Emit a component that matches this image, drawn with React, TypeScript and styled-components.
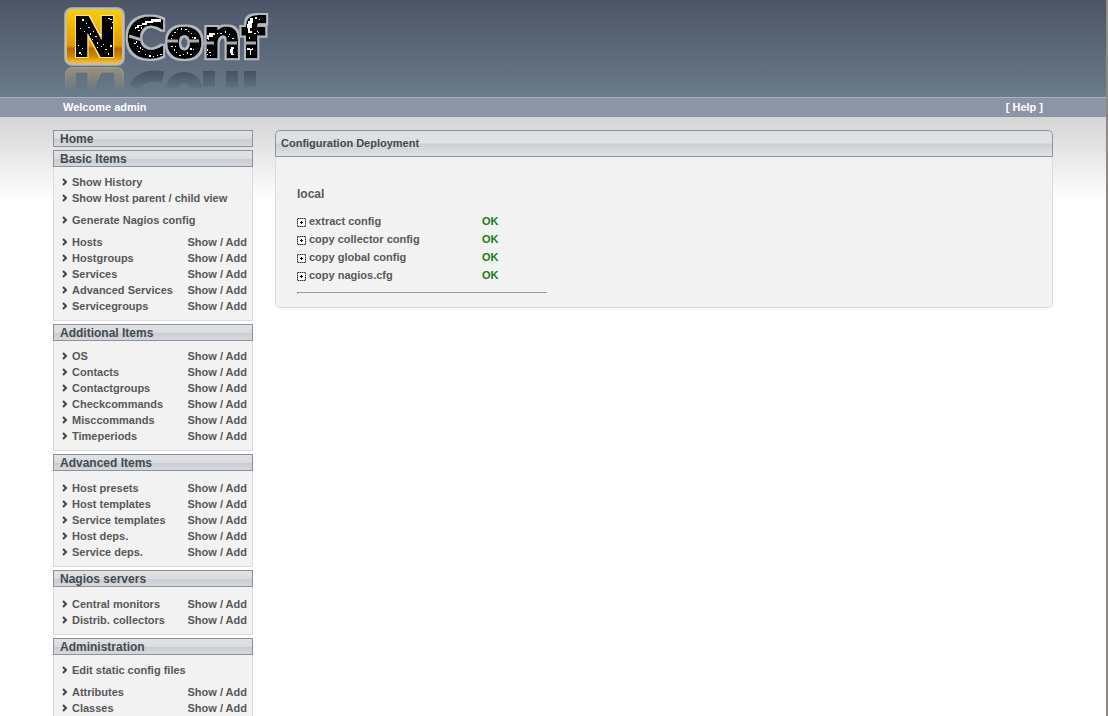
import React from "react";
import styled, { createGlobalStyle } from "styled-components";

const GlobalStyle = createGlobalStyle`
  * { box-sizing: border-box; }
  html { height: 100%; background: #fff; }
  body {
    margin: 0;
    min-height: 100%;
    font-family: "Liberation Sans", Arial, sans-serif;
    font-size: 11px;
    font-weight: bold;
    color: #585858;
  }
  a { color: inherit; text-decoration: none; }
  a:hover { text-decoration: underline; }
`;

const Page = styled.div`
  min-height: 100vh;
  border-right: 2px solid #8d8985;
  background: linear-gradient(#d4d4d4, #fff 84px) 0 117px no-repeat #fff;
`;

const Banner = styled.header`
  height: 97px;
  background: linear-gradient(#4c5567, #6a7b8a);
`;

const Container = styled.div`
  max-width: 1000px;
  margin: 0 auto;
`;

const LogoArt = styled.svg`
  display: block;
  margin-left: 7px;
`;

const UserBar = styled.nav`
  border-top: 1px solid #a9b1bc;
  background: #8c95a5;
  color: #fff;
`;

const UserBarInner = styled(Container)`
  display: flex;
  justify-content: space-between;
  padding: 0 10px;
  line-height: 19px;
`;

const Columns = styled(Container)`
  display: flex;
  align-items: flex-start;
  gap: 22px;
  padding-top: 13px;
`;

const Sidebar = styled.nav`
  flex: 0 0 200px;
  display: flex;
  flex-direction: column;
  gap: 3px;
`;

const MenuTitle = styled.h2`
  margin: 0;
  padding: 2px 6px 0;
  border: 1px solid #8b929c;
  background: linear-gradient(#e0e2e4, #dadcdf 50%, #c8ccd0 52%, #d6d9dc);
  color: #434b50;
  font-size: 12px;
  line-height: 13px;
`;

const MenuBody = styled.div<{ $top: number }>`
  display: flex;
  flex-direction: column;
  gap: 6px;
  padding: ${(p) => p.$top}px 5px 6px 8px;
  border: 1px solid #dcdcdc;
  border-top: 0;
  background: #f2f2f2;
`;

const MenuList = styled.ul`
  margin: 0;
  padding: 0;
  list-style: none;
`;

const MenuRow = styled.li`
  display: flex;
  align-items: center;
  line-height: 16px;
  white-space: nowrap;
`;

const Chevron = styled.svg`
  flex: none;
  margin-right: 4px;
`;

const Actions = styled.span`
  margin-left: auto;
`;

const Panel = styled.main`
  flex: 1;
  min-width: 0;
`;

const PanelTitle = styled.h1`
  margin: 0;
  padding: 0 5px;
  border: 1px solid #8b929c;
  border-radius: 5px 5px 0 0;
  background: linear-gradient(#dcdee0, #dfe1e3 48%, #cbcfd2 52%, #e0e3e5);
  color: #434b50;
  font-size: 11px;
  line-height: 25px;
`;

const PanelBody = styled.div`
  padding: 29px 21px 13px;
  border: 1px solid #dcdcdc;
  border-top: 0;
  border-radius: 0 0 5px 5px;
  background: #f2f2f2;
`;

const ServerName = styled.h2`
  margin: 0 0 9px;
  font-size: 12px;
  line-height: 17px;
`;

const Steps = styled.table`
  border-collapse: collapse;
  td { padding: 0; height: 18px; line-height: 18px; }
  td:first-child { width: 185px; }
`;

const Toggle = styled.button`
  display: flex;
  align-items: center;
  gap: 3px;
  padding: 0;
  border: 0;
  background: none;
  color: inherit;
  font: inherit;
  line-height: 18px;
  cursor: pointer;
`;

const PlusIcon = styled.svg`
  margin-top: 2px;
`;

const Status = styled.td`
  color: #1c7a1c;
`;

const Divider = styled.hr`
  width: 250px;
  height: 2px;
  margin: 8px 0 0;
  border: 0;
  border-top: 1px solid #999;
  border-left: 1px solid #999;
`;

type Item = { label: string; actions?: boolean };
type Section = { title: string; top?: number; groups: Item[][] };

const link = (label: string): Item => ({ label });
const crud = (...labels: string[]): Item[] => labels.map((label) => ({ label, actions: true }));

const sections: Section[] = [
  { title: "Home", groups: [] },
  {
    title: "Basic Items",
    groups: [
      [link("Show History"), link("Show Host parent / child view")],
      [link("Generate Nagios config")],
      crud("Hosts", "Hostgroups", "Services", "Advanced Services", "Servicegroups"),
    ],
  },
  {
    title: "Additional Items",
    groups: [crud("OS", "Contacts", "Contactgroups", "Checkcommands", "Misccommands", "Timeperiods")],
  },
  {
    title: "Advanced Items",
    top: 9,
    groups: [crud("Host presets", "Host templates", "Service templates", "Host deps.", "Service deps.")],
  },
  { title: "Nagios servers", top: 9, groups: [crud("Central monitors", "Distrib. collectors")] },
  { title: "Administration", groups: [[link("Edit static config files")], crud("Attributes", "Classes")] },
];

const steps = ["extract config", "copy collector config", "copy global config", "copy nagios.cfg"];

const LogoText = styled.text`
  font-family: "DejaVu Sans", sans-serif;
  font-weight: bold;
  font-size: 54px;
  fill: #000;
  stroke: #000;
  stroke-width: 2px;
`;

/* Worn spots on the lettering, as x, y pairs. */
const specks = [
  [82, 19], [80, 28], [84, 31], [88, 27], [90, 33], [93, 31], [95, 36], [92, 39], [97, 42], [99, 34],
  [78, 45], [82, 48], [79, 52], [81, 54], [101, 46], [105, 49], [108, 53], [103, 44], [110, 19], [112, 22],
  [111, 27], [108, 18], [86, 23], [97, 47], [110, 45],
  [137, 26], [135, 28], [138, 30], [141, 27], [143, 23], [134, 43], [137, 46], [140, 47], [138, 51],
  [142, 49], [145, 54], [149, 55], [153, 56], [157, 55], [160, 54], [136, 41],
  [172, 35], [174, 32], [177, 29], [181, 28], [185, 29], [188, 31], [191, 33], [194, 37], [171, 38], [192, 37],
  [171, 46], [174, 49], [176, 52], [179, 55], [183, 54], [187, 52], [190, 54], [193, 49], [175, 46], [190, 48],
  [208, 39], [217, 33], [220, 33], [225, 31], [229, 34], [232, 38], [228, 36], [207, 49], [209, 52],
  [207, 54], [210, 55], [255, 17], [259, 19], [257, 31], [254, 33], [249, 37], [258, 32],
];

function Logo() {
  return (
    <LogoArt width="212" height="97" viewBox="60 0 212 97" role="img" aria-label="NConf">
      <defs>
        <linearGradient id="gold" x1="0" y1="0" x2="0" y2="1">
          <stop offset="0" stopColor="#f7d000" />
          <stop offset=".25" stopColor="#f3ba00" />
          <stop offset=".66" stopColor="#e39a00" />
          <stop offset=".72" stopColor="#b46a00" />
          <stop offset=".85" stopColor="#cf8500" />
          <stop offset="1" stopColor="#ffc928" />
        </linearGradient>
        <linearGradient id="fade" gradientUnits="userSpaceOnUse" x1="0" y1="66" x2="0" y2="92">
          <stop offset="0" stopColor="#fff" stopOpacity=".5" />
          <stop offset="1" stopColor="#fff" stopOpacity="0" />
        </linearGradient>
        <mask id="reflection" maskUnits="userSpaceOnUse" x="60" y="66" width="212" height="31">
          <rect x="60" y="66" width="212" height="31" fill="url(#fade)" />
        </mask>
        <filter id="soft" x="-10%" y="-10%" width="120%" height="120%">
          <feGaussianBlur stdDeviation=".6" />
        </filter>
        <filter id="silverEdge" filterUnits="userSpaceOnUse" x="60" y="0" width="212" height="70">
          <feMorphology in="SourceAlpha" operator="dilate" radius="2" />
          <feGaussianBlur stdDeviation=".6" result="edge" />
          <feFlood floodColor="#b4b8bf" />
          <feComposite in2="edge" operator="in" result="halo" />
          <feMerge>
            <feMergeNode in="halo" />
            <feMergeNode in="SourceGraphic" />
          </feMerge>
        </filter>
        <filter id="goldEdge" filterUnits="userSpaceOnUse" x="60" y="0" width="80" height="70">
          <feMorphology in="SourceAlpha" operator="dilate" radius="1" result="edge" />
          <feFlood floodColor="#ffe88a" />
          <feComposite in2="edge" operator="in" result="halo" />
          <feMerge>
            <feMergeNode in="halo" />
            <feMergeNode in="SourceGraphic" />
          </feMerge>
        </filter>
      </defs>

      <g mask="url(#reflection)">
        <rect x="66" y="68" width="57" height="40" rx="6" fill="#d9b266" stroke="#d8c8a0" strokeWidth="2" />
        <path d="M75 72h13v25H75zM101 72h14v25H90z" fill="#68717b" stroke="#e6d3a0" strokeWidth="1" />
        <g fill="none" stroke="#20262e" strokeWidth="11">
          <path d="M163 77c-14-3-24 1-29 11" />
          <path d="M171 88c4-14 22-14 26 0" />
        </g>
        <path d="M203 71h12v16h-12zM226 71h12v16h-12zM244 71h12v16h-12z" fill="#20262e" />
      </g>

      <rect x="65" y="8" width="59" height="57" rx="7" fill="none" stroke="#9ba1a8" strokeWidth="2" filter="url(#soft)" />
      <rect x="66" y="9" width="57" height="55" rx="6" fill="url(#gold)" stroke="#c4bda7" strokeWidth="2" />
      <g filter="url(#goldEdge)">
        <LogoText x="72" y="56">N</LogoText>
      </g>
      <g filter="url(#silverEdge)">
        <LogoText x="126" y="57">Conf</LogoText>
      </g>
      <path d="M129 36L142 40M167 41H178M187 41H199M203 43H214M225 43H237M244 43H256" stroke="#a7abb2" strokeWidth="3" fill="none" />

      <g fill="#fff">
        {specks.map(([x, y], i) => (
          <rect key={i} x={x} y={y} width={i % 3 ? 1 : 2} height={i % 4 ? 1 : 2} />
        ))}
        <path d="M145 21h6v-2h10v3h-8v1h-6v2h-5v-2h3zM137 25h5v1h-3v2h-4v-1h2z" />
        <path d="M207 35h2v-2h6v2h-2v2h-4v2h-2zM230 49h1v-2h3v2h-1v5h1v1h-3v-2h-1z" />
        <path d="M248 21h2v-3h3v5h-1v5h-2v3h2v2h-4v-5h-1v-4h1zM247 48h3v1h2v-1h1v2h-2v5h-1v-5h-3z" />
      </g>
    </LogoArt>
  );
}

export default function App() {
  return (
    <>
      <GlobalStyle />
      <Page>
        <Banner>
          <Container>
            <Logo />
          </Container>
        </Banner>
        <UserBar>
          <UserBarInner>
            <span>Welcome admin</span>
            <a href="#help">[ Help ]</a>
          </UserBarInner>
        </UserBar>
        <Columns>
          <Sidebar>
            {sections.map((s) => (
              <section key={s.title}>
                <MenuTitle>{s.groups.length ? s.title : <a href="#home">{s.title}</a>}</MenuTitle>
                {s.groups.length > 0 && (
                  <MenuBody $top={s.top ?? 7}>
                    {s.groups.map((g, i) => (
                      <MenuList key={i}>
                        {g.map((item) => (
                          <MenuRow key={item.label}>
                            <Chevron width="6" height="8" viewBox="0 0 6 8" aria-hidden="true">
                              <path d="M1 1l3 3-3 3" fill="none" stroke="#444" strokeWidth="2" />
                            </Chevron>
                            {item.actions ? <span>{item.label}</span> : <a href="#open">{item.label}</a>}
                            {item.actions && (
                              <Actions>
                                <a href="#show">Show</a> / <a href="#add">Add</a>
                              </Actions>
                            )}
                          </MenuRow>
                        ))}
                      </MenuList>
                    ))}
                  </MenuBody>
                )}
              </section>
            ))}
          </Sidebar>
          <Panel>
            <PanelTitle>Configuration Deployment</PanelTitle>
            <PanelBody>
              <ServerName>local</ServerName>
              <Steps>
                <tbody>
                  {steps.map((s) => (
                    <tr key={s}>
                      <td>
                        <Toggle type="button">
                          <PlusIcon width="9" height="9" viewBox="0 0 9 9" aria-hidden="true">
                            <rect x=".5" y=".5" width="8" height="8" fill="#fff" stroke="#333" strokeDasharray="1.5 .5" />
                            <path d="M3 4.5h3M4.5 3v3" stroke="#000" />
                          </PlusIcon>
                          {s}
                        </Toggle>
                      </td>
                      <Status>OK</Status>
                    </tr>
                  ))}
                </tbody>
              </Steps>
              <Divider />
            </PanelBody>
          </Panel>
        </Columns>
      </Page>
    </>
  );
}
